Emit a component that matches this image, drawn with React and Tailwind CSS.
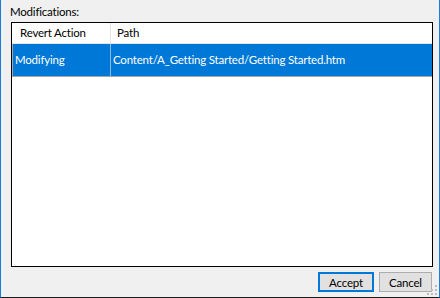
import React from 'react';

const rows = [
  { action: 'Modifying', path: 'Content/A_Getting Started/Getting Started.htm' },
];

const Grip = () => (
  <svg className="absolute right-[2px] bottom-[2px]" width="10" height="10" viewBox="0 0 10 10">
    <rect x="8" y="0" width="2" height="2" fill="#bcbcbc" />
    <rect x="4" y="4" width="2" height="2" fill="#bcbcbc" />
    <rect x="8" y="4" width="2" height="2" fill="#bcbcbc" />
    <rect x="0" y="8" width="2" height="2" fill="#bcbcbc" />
    <rect x="4" y="8" width="2" height="2" fill="#bcbcbc" />
    <rect x="8" y="8" width="2" height="2" fill="#bcbcbc" />
  </svg>
);

const App = () => {
  return (
    <div
      className="relative w-[440px] h-[298px] bg-[#f0f0f0] border-l border-l-[#1a7fd4] border-r border-r-[#1a7fd4] border-b border-b-[#1b1b1b] text-[11.5px] tracking-[-0.2px] text-black flex flex-col"
      style={{ fontFamily: 'Lato, "Noto Sans", sans-serif' }}
    >
      {/* Label */}
      <div className="h-[22px] pl-[9px] pt-[4px] leading-[15px]">Modifications:</div>

      {/* List */}
      <div className="ml-[10px] w-[422px] h-[245px] border border-black bg-white flex flex-col">
        <div className="flex h-[21px] border-b border-[#e5e5e5] leading-[20px]">
          <div className="w-[99px] pl-[8px] border-r border-[#e5e5e5]">Revert Action</div>
          <div className="pl-[6px]">Path</div>
        </div>
        {rows.map((row) => (
          <div
            key={row.path}
            className="flex h-[33px] bg-[#0078d7] text-white border-l border-b border-[#a6a6a6] items-center"
          >
            <div className="w-[98px] h-full flex items-center pl-[2px] border-r border-[#8fb8dd]">{row.action}</div>
            <div className="pl-[2px]">{row.path}</div>
          </div>
        ))}
      </div>

      {/* Buttons */}
      <div className="flex justify-end gap-[5px] mt-[5px] pr-[7px]">
        <button className="w-[56px] h-[20px] border-2 border-[#0078d7] bg-[#e1e1e1] leading-[15px]">Accept</button>
        <button className="w-[53px] h-[20px] border border-[#adadad] bg-[#e1e1e1] leading-[17px]">Cancel</button>
      </div>

      <Grip />
    </div>
  );
};

export default App;
